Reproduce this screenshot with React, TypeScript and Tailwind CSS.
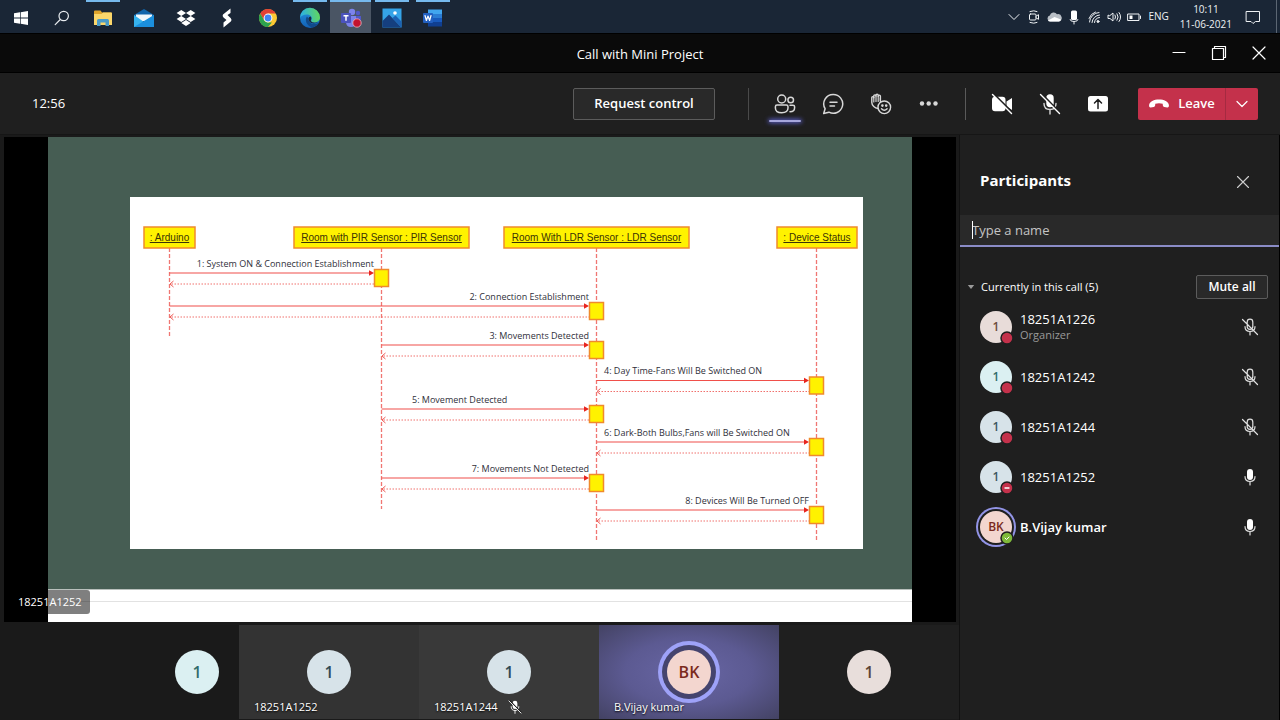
import React from "react";

type IconProps = { className?: string };

const stroke = {
  fill: "none",
  stroke: "currentColor",
  strokeLinecap: "round" as const,
  strokeLinejoin: "round" as const,
};

/* ---------- Taskbar icons ---------- */

const WindowsIcon = () => (
  <svg viewBox="0 0 16 16" className="size-4" fill="#fff">
    <path d="M1 3.2 7 2.3v5.3H1zM7.7 2.2 15 1.1v6.5H7.7zM1 8.4h6v5.3l-6-.9zM7.7 8.4H15v6.5l-7.3-1.1z" />
  </svg>
);

const SearchIcon = () => (
  <svg viewBox="0 0 16 16" className="size-4" {...stroke} stroke="#e8ecf0" strokeWidth="1.2">
    <circle cx="9.7" cy="6" r="4.7" />
    <path d="M6.3 9.5 1.2 14.6" />
  </svg>
);

const ExplorerIcon = () => (
  <svg viewBox="0 0 20 18" className="h-[18px] w-5">
    <path d="M1 2.5q0-1 1-1h5.500l1.500 2H18q1 0 1 1V15H1z" fill="#e0a52c" />
    <path d="M1 5h7.500l1.500-1.500h8q1 0 1 1V16H1z" fill="#fbd76b" />
    <path d="M4 17V11.500q0-1.500 1.500-1.500h9q1.500 0 1.500 1.500V17h-3.500v-3.500h-5V17z" fill="#4b9cc9" />
  </svg>
);

const MailIcon = () => (
  <svg viewBox="0 0 22 20" className="h-5 w-[22px]">
    <path d="M1 7 11 1l10 6v5H1z" fill="#1265ab" />
    <path d="M3 6.500h16V13H3z" fill="#f1f7fb" />
    <path d="M1 7l10 7 10-7v12H1z" fill="#36b2ee" />
    <path d="M1 19 21 7v12z" fill="#1b8fdd" />
  </svg>
);

const DropboxIcon = () => (
  <svg viewBox="0 0 20 18" className="h-[18px] w-5" fill="#fff">
    <path d="m5.300 1 4.700 3-4.700 3L.6 4zM14.700 1l4.700 3-4.700 3L10 4zM5.300 7l4.700 3-4.700 3L.6 10zM14.700 7l4.700 3-4.700 3L10 10zM10 11l4.700 3L10 17l-4.700-3z" />
  </svg>
);

const BoltIcon = () => (
  <svg viewBox="0 0 12 20" className="h-5 w-3" fill="#fff">
    <path d="M9.500.5 2 6.500Q1 8 2.500 9.500L5.500 12 2.500 14.500V19.500L9.800 13.500Q11.300 12 9.800 10.300L6.500 7 9.500 5z" />
  </svg>
);

const ChromeIcon = () => (
  <svg viewBox="0 0 20 20" className="size-5">
    <circle cx="10" cy="10" r="9" fill="#fcc934" />
    <path d="M2.200 5.500A9 9 0 0 1 17.800 5.500H10L6.100 12.250z" fill="#e24135" />
    <path d="M2.200 5.500 6.100 12.250Q7.500 14.500 10 14.500h3.900L10 19A9 9 0 0 1 2.200 5.500" fill="#2da24e" />
    <path d="M10 19l3.900-6.750L13 14z" fill="#2da24e" />
    <circle cx="10" cy="10" r="4.400" fill="#fff" />
    <circle cx="10" cy="10" r="3.400" fill="#4285f4" />
  </svg>
);

const EdgeIcon = () => (
  <svg viewBox="0 0 22 22" className="size-[22px]">
    <defs>
      <linearGradient id="edgeTop" x1="0" x2="1" y1="0.400" y2="0.300">
        <stop offset="0" stopColor="#2ab0e8" />
        <stop offset="1" stopColor="#62d85a" />
      </linearGradient>
      <linearGradient id="edgeSide" x1="0" x2="0" y1="0" y2="1">
        <stop offset="0" stopColor="#2596e0" />
        <stop offset="1" stopColor="#1260b5" />
      </linearGradient>
    </defs>
    <circle cx="11" cy="11" r="10" fill="url(#edgeSide)" />
    <path d="M1 11A10 10 0 0 1 21 10.500C21 14 18 15.500 15 15.500c-2.500 0-3.500-1-2.500-2.500C14 10 11 7.500 8 7.500 4.500 7.500 2 9 1 11" fill="url(#edgeTop)" />
    <path d="M8 9.500C5.500 12 7 19 13.500 20.500 16.500 20 19 18 20 15.800 15 18.500 9 16.500 9.500 11.500z" fill="#114a8b" />
    <path d="M11.500 9.500c2 2-.500 3.500.800 5 1.500 1.500 4.500 1.500 6.700.500-4 3-9.500 1-9.500-3.500q0-1.500 2-2" fill="#1a2a3c" />
  </svg>
);

const TeamsIcon = () => (
  <svg viewBox="0 0 22 20" className="h-5 w-[22px]">
    <circle cx="12" cy="4" r="3.200" fill="#7b83eb" />
    <circle cx="18" cy="5" r="2.200" fill="#5059c9" />
    <path d="M15 8h6v6q0 3-3 3t-3-3z" fill="#5059c9" />
    <path d="M6 8h10v6q0 5-5 5t-5-5z" fill="#7b83eb" />
    <rect x="1" y="5" width="10" height="10" rx="1" fill="#4b53bc" />
    <path d="M3.500 7.700h5M6 7.700v5" stroke="#fff" strokeWidth="1.500" />
    <circle cx="17" cy="15" r="4.200" fill="#c4122f" stroke="#e9b7c0" strokeWidth=".8" />
  </svg>
);

const PhotosIcon = () => (
  <svg viewBox="0 0 20 20" className="size-5">
    <path d="M.5.500h19v19H.5z" fill="#35a4e8" />
    <path d="M.5 13 7 6.500 19.500 19.500H.5z" fill="#153f7f" />
    <path d="m10.500 10 3-2.500 6 6v6z" fill="#1c62b3" />
    <circle cx="13" cy="5" r="1.800" fill="#fff" />
  </svg>
);

const WordIcon = () => (
  <svg viewBox="0 0 20 18" className="h-[18px] w-5">
    <path d="M5 .5h14v4.500H5z" fill="#41a5ee" />
    <path d="M5 5h14v4H5z" fill="#2b7cd3" />
    <path d="M5 9h14v4H5z" fill="#185abd" />
    <path d="M5 13h14v4.500H5z" fill="#103f91" />
    <rect y="4" width="10" height="10" rx="1" fill="#2360c0" />
    <path d="m2 6.500 1.400 5L5 7l1.600 4.500L8 6.500" {...stroke} stroke="#fff" strokeWidth="1.200" />
  </svg>
);

const taskbarApps = [
  { name: "Start", icon: <WindowsIcon /> },
  { name: "Search", icon: <SearchIcon /> },
  { name: "File Explorer", icon: <ExplorerIcon />, open: true },
  { name: "Mail", icon: <MailIcon /> },
  { name: "Dropbox", icon: <DropboxIcon /> },
  { name: "Shortcut", icon: <BoltIcon /> },
  { name: "Chrome", icon: <ChromeIcon /> },
  { name: "Edge", icon: <EdgeIcon />, open: true },
  { name: "Teams", icon: <TeamsIcon />, open: true, active: true },
  { name: "Photos", icon: <PhotosIcon />, open: true },
  { name: "Word", icon: <WordIcon />, open: true },
];

const trayIcons = [
  {
    name: "Show hidden icons",
    icon: <path d="m3 5.500 5 5 5-5" />,
  },
  {
    name: "Meet Now",
    icon: (
      <>
        <rect x="3.500" y="5" width="6.500" height="6" rx="1" />
        <path d="m10 7.200 2.500-1.500v4.600L10 8.800M4 2.500q4-1.500 7 0M4 13.500q4 1.500 7 0" />
      </>
    ),
  },
  {
    name: "OneDrive",
    icon: (
      <>
        <path d="M4.200 12.500a3 3 0 0 1-.4-5.900 4 4 0 0 1 7.200-1.300 3.700 3.700 0 0 1 2 7.200z" fill="#b9bfc6" stroke="none" />
        <path d="M2 11.500 8.500 8l6.500 2.500q-.3 2-2 2H4q-1.600 0-2-1" fill="#fff" stroke="none" />
      </>
    ),
  },
  {
    name: "Microphone in use",
    icon: (
      <>
        <rect x="5" y="1.500" width="6" height="9.500" rx="1.500" fill="#fff" stroke="none" />
        <path d="M4 10.500q0 2 4 2t4-2M8 12.500V15" />
      </>
    ),
  },
  {
    name: "Network",
    icon: (
      <>
        <path d="M3.500 13A10 10 0 0 1 13 3.500M6 13.500A8 8 0 0 1 13.500 6M8.500 13.500a5 5 0 0 1 5-5M3 9.500A10 10 0 0 1 9.500 3" />
        <circle cx="12" cy="12.500" r="1" fill="currentColor" />
      </>
    ),
  },
  {
    name: "Volume",
    icon: <path d="M2 6.500v3h2L7 12V4L4 6.500zM9 6q1.200 2 0 4M11 4.700q2.300 3.300 0 6.600M13 3.500q3.300 4.500 0 9" />,
  },
  {
    name: "Battery",
    icon: (
      <>
        <rect x="2" y="5" width="11" height="6.500" />
        <path d="M14.500 7v2.500" />
        <path d="M3.500 6.500h3V10h-3z" fill="#fff" stroke="none" />
      </>
    ),
  },
];

function Taskbar() {
  return (
    <nav aria-label="Taskbar" className="flex h-[33px] items-stretch justify-between bg-[#1a2636]">
      <div className="grid w-[454px] grid-cols-11">
        {taskbarApps.map((app) => (
          <button
            key={app.name}
            aria-label={app.name}
            className={`flex flex-col items-center ${app.active ? "bg-[#4a5564]" : ""}`}
          >
            <span className={`h-[2px] shrink-0 ${app.active ? "w-full" : "w-[34px]"} ${app.open ? "bg-[#76b9ed]" : ""}`} />
            <span className="flex flex-1 items-center">{app.icon}</span>
          </button>
        ))}
      </div>
      <div className="flex items-center pr-[3px] text-[#eef1f4]">
        {trayIcons.map((t) => (
          <button key={t.name} aria-label={t.name} className="flex w-5 justify-center">
            <svg viewBox="0 0 16 16" className="size-4" {...stroke} strokeWidth="1">
              {t.icon}
            </svg>
          </button>
        ))}
        <button className="ml-1 text-[10px]">ENG</button>
        <button className="ml-[11px] flex flex-col items-center text-[10px] leading-[15px]">
          <span>10:11</span>
          <span>11-06-2021</span>
        </button>
        <button aria-label="Notifications" className="ml-[13px] flex">
          <svg viewBox="0 0 16 16" className="size-4" {...stroke} strokeWidth="1">
            <path d="M1.500 2.500h13v10h-4l-2.500 2-2-2H1.500z" />
          </svg>
        </button>
        <span className="ml-[15px] h-[33px] w-px bg-[#5b6673]" />
      </div>
    </nav>
  );
}

/* ---------- Title bar ---------- */

function TitleBar() {
  return (
    <header className="grid h-10 grid-cols-[1fr_auto_1fr] items-center border-y border-black bg-[#0a0a0a] text-white">
      <span />
      <h1 className="pt-[2px] text-[13px] leading-5">Call with Mini Project</h1>
      <div className="flex justify-end pr-[1px]">
        <button aria-label="Minimize" className="flex w-10 justify-center">
          <svg viewBox="0 0 16 16" className="size-4" {...stroke} strokeWidth="1.200">
            <path d="M2 7.500h12" />
          </svg>
        </button>
        <button aria-label="Restore" className="flex w-10 justify-center">
          <svg viewBox="0 0 16 16" className="size-4" {...stroke} strokeWidth="1.200">
            <path d="M1.500 3.500h11v11h-11zM3.500 3.500v-2h11v11h-2" />
          </svg>
        </button>
        <button aria-label="Close window" className="flex w-10 justify-center">
          <svg viewBox="0 0 16 16" className="size-4" {...stroke} strokeWidth="1.200">
            <path d="m2 2 12 12M14 2 2 14" />
          </svg>
        </button>
      </div>
    </header>
  );
}

/* ---------- Call controls ---------- */

const PeopleIcon = () => (
  <svg viewBox="0 0 22 20" className="h-5 w-[22px]" {...stroke} strokeWidth="1.500">
    <circle cx="7.700" cy="5" r="4" />
    <circle cx="16.700" cy="6" r="2.800" />
    <path d="M3 11h9.300q1.700 0 1.700 1.700v1.300q0 4.700-6.300 4.700T1.400 14v-1.300Q1.400 11 3 11M16 11.200h3q1.600 0 1.600 1.600v1q0 4-4.600 4" />
  </svg>
);

const ChatIcon = () => (
  <svg viewBox="0 0 22 22" className="size-[22px]" {...stroke} strokeWidth="1.500">
    <path d="M11.300 1.500a9.400 9.400 0 1 1-4.400 17.700L1.700 20.500l1.400-4.800A9.400 9.400 0 0 1 11.300 1.500M8 9.300h7M8 13h4.500" />
  </svg>
);

const ReactionIcon = () => (
  <svg viewBox="0 0 22 22" className="size-[22px]" {...stroke} strokeWidth="1.400">
    <path d="M8 15.500C5 15 1.800 12.500 1.800 9.500V4.700q0-1.100 1-1.100t1 1.100V3q0-1.100 1.100-1.100T6 3V2.400Q6 1.200 7.100 1.200t1.100 1.200V3.200q0-1.100 1.100-1.100t1.100 1.100V7.500" />
    <path d="M3.800 4v5M6 3v5.500M8.200 3v5.500M10.400 5v4" strokeWidth="1.200" />
    <circle cx="14.300" cy="14.300" r="6.300" />
    <path d="M11.500 15.800q2.800 3 5.600 0" />
    <circle cx="12.400" cy="12.600" r=".6" fill="currentColor" />
    <circle cx="16.200" cy="12.600" r=".6" fill="currentColor" />
  </svg>
);

const MoreIcon = () => (
  <svg viewBox="0 0 20 20" className="size-5" fill="currentColor">
    <circle cx="3" cy="9.500" r="2.200" />
    <circle cx="9.700" cy="9.500" r="2.200" />
    <circle cx="16.500" cy="9.500" r="2.200" />
  </svg>
);

const CameraOffIcon = () => (
  <svg viewBox="0 0 22 22" className="size-[22px] text-white">
    <path d="M4 3.700h7.500q3 0 3 3v8.600q0 3-3 3H4q-3 0-3-3V6.700q0-3 3-3M15.500 8.500 21 5v12l-5.500-3.500z" fill="currentColor" />
    <path d="m2.700.8 19 19" stroke="#1f1f1f" strokeWidth="1.800" />
    <path d="m1.500 1.500 19 19" stroke="currentColor" strokeWidth="1.400" strokeLinecap="round" />
  </svg>
);

const MicOffFilledIcon = ({ className = "size-[22px]" }: IconProps) => (
  <svg viewBox="0 0 22 22" className={className}>
    <rect x="7.300" y="1.200" width="7.400" height="13" rx="3.700" fill="#fff" />
    <path d="M5 10.500q0 6 6 6t6-6M11 16.500V21" {...stroke} strokeWidth="1.400" />
    <path d="m2.800 1 18 18.500" stroke="#1f1f1f" strokeWidth="1.800" />
    <path d="m1.500 1.500 19 19" stroke="#fff" strokeWidth="1.400" strokeLinecap="round" />
  </svg>
);

const ShareIcon = () => (
  <svg viewBox="0 0 22 18" className="h-[18px] w-[22px]">
    <rect x="1" y="1" width="20" height="15.500" rx="2.500" fill="#fff" />
    <path d="M11 13.500v-9M7.500 8 11 4.500 14.500 8" {...stroke} stroke="#1f1f1f" strokeWidth="1.500" />
  </svg>
);

const HangUpIcon = () => (
  <svg viewBox="0 0 22 12" className="h-3 w-[22px]" fill="#fff">
    <path d="M11 1.500c5 0 9.500 2 9.900 5.500.2 1.500-.4 2.700-1.600 2.500l-3-.6c-1-.2-1.400-.9-1.500-1.900l-.1-1.200c-2.300-.8-5.100-.8-7.400 0L7.200 7c-.1 1-.5 1.700-1.500 1.900l-3 .6C1.500 9.700.9 8.500 1.100 7 1.500 3.500 6 1.500 11 1.500" />
  </svg>
);

function IconButton({ label, active, children }: { label: string; active?: boolean; children: React.ReactNode }) {
  return (
    <button aria-label={label} className="relative flex h-9 w-12 items-center justify-center text-[#d8d8d8]">
      {children}
      {active && (
        <span className="absolute inset-x-2 bottom-0 h-[2px] rounded-full bg-[#a6a7dc] shadow-[0_0_4px_1px_#5b5fc7]" />
      )}
    </button>
  );
}

function CallToolbar() {
  return (
    <div className="flex h-[61px] items-center justify-between bg-[#1f1f1f] pr-[22px] pl-8 text-white">
      <span className="text-[13px]">12:56</span>
      <div className="flex items-center">
        <button className="h-8 w-[142px] rounded-[2px] border border-[#5c5c5c] bg-[#292929] text-[13px] font-semibold">
          Request control
        </button>
        <span className="mr-3 ml-[33px] h-8 w-px bg-[#4a4a4a]" />
        <IconButton label="Participants" active>
          <PeopleIcon />
        </IconButton>
        <IconButton label="Chat">
          <ChatIcon />
        </IconButton>
        <IconButton label="Reactions">
          <ReactionIcon />
        </IconButton>
        <IconButton label="More actions">
          <MoreIcon />
        </IconButton>
        <span className="mx-3 h-8 w-px bg-[#5a5a5a]" />
        <IconButton label="Turn camera on">
          <CameraOffIcon />
        </IconButton>
        <IconButton label="Unmute">
          <MicOffFilledIcon />
        </IconButton>
        <IconButton label="Share content">
          <ShareIcon />
        </IconButton>
        <div className="ml-4 flex h-8 overflow-hidden rounded-[2px] bg-[#c4314b]">
          <button className="flex w-[87px] items-center justify-center gap-2 text-[13px] font-semibold">
            <HangUpIcon />
            Leave
          </button>
          <button aria-label="Leave options" className="flex w-[33px] items-center justify-center border-l border-[#a52a41]">
            <svg viewBox="0 0 16 16" className="size-4" {...stroke} strokeWidth="1.200">
              <path d="m3 5.500 5 5 5-5" />
            </svg>
          </button>
        </div>
      </div>
    </div>
  );
}

/* ---------- Shared slide: sequence diagram ---------- */

const lifelines = [
  { x: 169.5, left: 144, width: 51, end: 337, label: ": Arduino" },
  { x: 381.5, left: 294, width: 175, end: 509, label: "Room with PIR Sensor : PIR Sensor" },
  { x: 596.5, left: 504, width: 185, end: 540, label: "Room With LDR Sensor : LDR Sensor" },
  { x: 816.5, left: 777, width: 80, end: 540, label: ": Device Status" },
];

const messages = [
  { from: 0, to: 1, y: 273, text: "1: System ON & Connection Establishment", at: 374, anchor: "end" as const },
  { from: 0, to: 2, y: 306, text: "2: Connection Establishment", at: 589, anchor: "end" as const },
  { from: 1, to: 2, y: 345, text: "3: Movements Detected", at: 589, anchor: "end" as const },
  { from: 2, to: 3, y: 380.5, text: "4: Day Time-Fans Will Be Switched ON", at: 604, anchor: "start" as const },
  { from: 1, to: 2, y: 409, text: "5: Movement Detected", at: 412, anchor: "start" as const },
  { from: 2, to: 3, y: 442, text: "6: Dark-Both Bulbs,Fans will Be Switched ON", at: 604, anchor: "start" as const },
  { from: 1, to: 2, y: 478, text: "7: Movements Not Detected", at: 589, anchor: "end" as const },
  { from: 2, to: 3, y: 510, text: "8: Devices Will Be Turned OFF", at: 809, anchor: "end" as const },
];

function SequenceDiagram() {
  return (
    <svg viewBox="130 197 733 352" role="img" aria-label="Sequence diagram" className="block h-auto w-full bg-white">
      {lifelines.map((l) => (
        <g key={l.label}>
          <path d={`M${l.x} 248V${l.end}`} stroke="#f07672" strokeWidth="1.300" strokeDasharray="4 2" />
          <rect x={l.left} y="227" width={l.width} height="21" fill="#fff200" stroke="#f08a2c" strokeWidth="1.500" />
          <text
            x={l.left + l.width / 2}
            y="241"
            textAnchor="middle"
            fill="#3a3305"
            textDecoration="underline"
            className="font-['Liberation_Sans',sans-serif] text-[10px]"
          >
            {l.label}
          </text>
        </g>
      ))}
      {messages.map((m) => {
        const x1 = lifelines[m.from].x;
        const x2 = lifelines[m.to].x - 7.5;
        const back = m.y + 11;
        return (
          <g key={m.text}>
            <path d={`M${x1} ${m.y}H${x2 - 3}`} stroke="#f04f4a" strokeWidth="1.200" />
            <path d={`M${x2 - 5} ${m.y - 2.8}L${x2} ${m.y}L${x2 - 5} ${m.y + 2.8}z`} fill="#e8251f" />
            <path d={`M${x1 + 2} ${back}H${x2}`} stroke="#f0706c" strokeWidth="1" strokeDasharray="1.500 1.500" />
            <path d={`M${x1 + 4} ${back - 3}L${x1 + 0.5} ${back}L${x1 + 4} ${back + 3}`} fill="none" stroke="#ee5a55" />
            <rect x={x2 + 0.5} y={m.y - 3.5} width="14" height="17" fill="#fff200" stroke="#f08a2c" strokeWidth="1.500" />
            <text
              x={m.at}
              y={m.y - 6.5}
              textAnchor={m.anchor}
              fill="#30303a"
              className="font-['Open_Sans','Noto_Sans',sans-serif] text-[9px]"
            >
              {m.text}
            </text>
          </g>
        );
      })}
    </svg>
  );
}

function Stage() {
  return (
    <section aria-label="Shared screen" className="relative mr-[3px] ml-1 flex flex-1 bg-black px-11">
      <div className="flex flex-1 flex-col bg-white">
        <div className="flex-1 bg-[#465d53] pt-[60px] pr-[49px] pb-10 pl-[82px]">
          <SequenceDiagram />
        </div>
        <div className="h-[13px] border-y border-t-[#b9c0bc] border-b-[#e2e2e2]" />
        <div className="h-5" />
      </div>
      <span className="absolute bottom-2 left-0 rounded-r-[3px] bg-black/50 pr-2 pl-[14px] text-[11px] leading-6 text-white">
        18251A1252
      </span>
    </section>
  );
}

/* ---------- Video strip ---------- */

const tiles = [
  { id: "a", initials: "1", name: "18251A1252", tile: "bg-[#333333]", avatar: "bg-[#d7e3e9] text-[#2f4a55]" },
  { id: "b", initials: "1", name: "18251A1244", muted: true, tile: "bg-[#393939]", avatar: "bg-[#d7e3e9] text-[#2f4a55]" },
  {
    id: "c",
    initials: "BK",
    name: "B.Vijay kumar",
    tile: "bg-[radial-gradient(farthest-corner,#6866a4,#5c5a92_50%,#434263)]",
    avatar: "bg-[#f3d6cf] text-[#7a2a1d] ring-4 ring-[#9ea2f8] ring-offset-[5px] ring-offset-[#45446e]",
  },
  { id: "d", initials: "1", name: "", tile: "bg-[#1f1f1f]", avatar: "bg-[#e8dedb] text-[#5b4436]" },
];

function VideoStrip() {
  return (
    <section aria-label="Video tiles" className="mt-[3px] mb-px flex h-[94px]">
      <div className="flex flex-1 items-center justify-end bg-[#1a1a1a] pr-5">
        <span className="flex size-11 items-center justify-center rounded-full bg-[#dbf0f2] text-base font-semibold text-[#2f6b6b]">
          1
        </span>
      </div>
      {tiles.map((t) => (
        <div key={t.id} className={`relative flex w-[180px] items-center justify-center ${t.tile}`}>
          <span className={`flex size-11 items-center justify-center rounded-full text-base font-semibold ${t.avatar}`}>
            {t.initials}
          </span>
          <span className="absolute bottom-1 left-[15px] flex items-center gap-[10px] text-[11px] leading-4 text-white [text-shadow:0_1px_2px_#000]">
            {t.name}
            {t.muted && <MicOffFilledIcon className="size-[14px]" />}
          </span>
        </div>
      ))}
    </section>
  );
}

/* ---------- Participants panel ---------- */

const MicOffIcon = () => (
  <svg viewBox="0 0 18 18" className="size-[18px]" {...stroke} strokeWidth="1.200">
    <path d="M6.200 6V4a2.800 2.800 0 0 1 5.600 0v4.500a2.800 2.800 0 0 1-5.600 0zM4 8.500q0 5 5 5t5-5M9 13.500V17M1.500 1.500l15 15" />
  </svg>
);

const MicIcon = () => (
  <svg viewBox="0 0 18 18" className="size-[18px]" {...stroke} strokeWidth="1.200">
    <rect x="6" y="1" width="6" height="11" rx="3" fill="#fff" stroke="none" />
    <path d="M4 8.500q0 5 5 5t5-5M9 13.500V17" />
  </svg>
);

type Status = "busy" | "dnd" | "available";

const participants: {
  name: string;
  role?: string;
  initials: string;
  avatar: string;
  status: Status;
  muted: boolean;
  bold?: boolean;
}[] = [
  { name: "18251A1226", role: "Organizer", initials: "1", avatar: "bg-[#e8dcd9] text-[#6b4a3c]", status: "busy", muted: true },
  { name: "18251A1242", initials: "1", avatar: "bg-[#dbf0f2] text-[#2f6b6b]", status: "busy", muted: true },
  { name: "18251A1244", initials: "1", avatar: "bg-[#d7e3e9] text-[#3b5560]", status: "busy", muted: true },
  { name: "18251A1252", initials: "1", avatar: "bg-[#d7e3e9] text-[#3b5560]", status: "dnd", muted: false },
  {
    name: "B.Vijay kumar",
    initials: "BK",
    avatar: "bg-[#f3d6cf] text-[#7a2a1d] ring-2 ring-[#9294e6] ring-offset-2 ring-offset-[#1f1f1f]",
    status: "available",
    muted: false,
    bold: true,
  },
];

function StatusBadge({ status }: { status: Status }) {
  return (
    <svg viewBox="0 0 14 14" className="absolute -right-[2px] -bottom-[2px] size-[14px]" {...stroke}>
      <circle cx="7" cy="7" r="6" fill={status === "available" ? "#7fba3a" : "#c4314b"} stroke="#1f1f1f" strokeWidth="1.500" />
      {status === "dnd" && <path d="M5 7h4" stroke="#fff" strokeWidth="1.300" />}
      {status === "available" && <path d="m5 7 1.500 1.500L9 6" stroke="#fff" />}
    </svg>
  );
}

function ParticipantsPanel() {
  return (
    <aside
      aria-label="Participants"
      className="w-[321px] shrink-0 border-x border-r-black border-l-[#111111] bg-[#1f1f1f] text-white"
    >
      <div className="flex items-center justify-between pt-[33px] pr-7 pl-5">
        <h2 className="text-[15px] leading-6 font-bold">Participants</h2>
        <button aria-label="Close panel" className="mt-1 text-[#cfcfcf]">
          <svg viewBox="0 0 16 16" className="size-4" {...stroke} strokeWidth="1.100">
            <path d="m2.500 2.500 11 11M13.500 2.500l-11 11" />
          </svg>
        </button>
      </div>
      <div className="relative mt-[23px]">
        <input
          type="text"
          aria-label="Type a name"
          placeholder="Type a name"
          className="block h-8 w-full border-b-2 border-[#8b8cc7] bg-[#292929] pl-3 text-[13px] outline-none placeholder:text-[#c4c4c4]"
        />
        <span className="absolute top-[6px] left-3 h-[18px] w-px bg-white" />
      </div>
      <div className="mt-7 flex items-center justify-between pr-[11px] pl-[7px]">
        <button className="flex items-center gap-[6px] text-[11px]">
          <svg viewBox="0 0 8 8" className="size-2" fill="#9a9a9a">
            <path d="M.8 2h6.400L4 6z" />
          </svg>
          Currently in this call (5)
        </button>
        <button className="h-6 w-[72px] rounded-[2px] border border-[#5c5c5c] bg-[#292929] text-xs font-semibold">
          Mute all
        </button>
      </div>
      <ul className="mt-[3px]">
        {participants.map((p) => (
          <li key={p.name} className="flex h-[50px] items-center px-5">
            <span className={`relative flex size-8 items-center justify-center rounded-full text-xs font-semibold ${p.avatar}`}>
              {p.initials}
              <StatusBadge status={p.status} />
            </span>
            <span className="ml-2 flex flex-1 flex-col leading-4">
              <span className={`text-[13px] ${p.bold ? "font-semibold" : "font-medium"}`}>{p.name}</span>
              {p.role && <span className="text-[11px] text-[#9a9a9a]">{p.role}</span>}
            </span>
            <button aria-label={p.muted ? `${p.name} is muted` : `Mute ${p.name}`} className="text-[#e0e0e0]">
              {p.muted ? <MicOffIcon /> : <MicIcon />}
            </button>
          </li>
        ))}
      </ul>
    </aside>
  );
}

export default function App() {
  return (
    <div className="flex min-h-screen flex-col bg-[#1a1a1a] font-['Open_Sans','Noto_Sans',sans-serif]">
      <Taskbar />
      <TitleBar />
      <CallToolbar />
      <main className="flex flex-1 border-t border-[#161616]">
        <div className="flex min-w-0 flex-1 flex-col pt-[2px]">
          <Stage />
          <VideoStrip />
        </div>
        <ParticipantsPanel />
      </main>
    </div>
  );
}
